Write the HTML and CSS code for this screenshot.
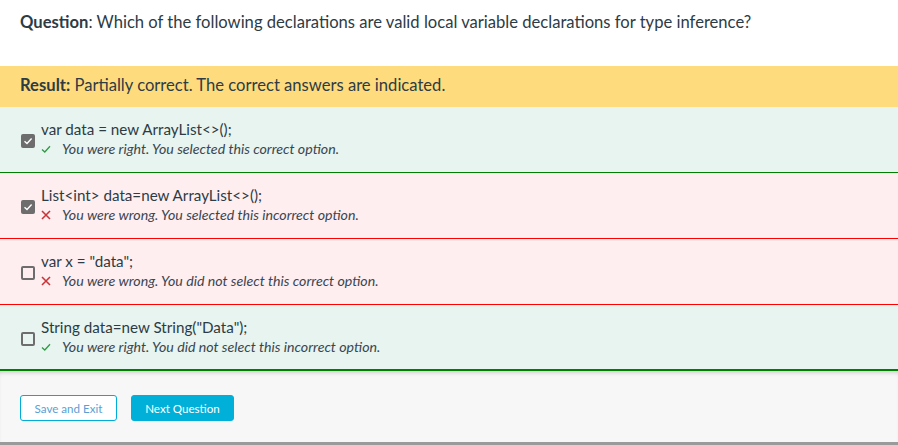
FILE: index.html
```html
<!DOCTYPE html>
<html>
<head>
<meta charset="utf-8">
<link rel="stylesheet" href="styles.css">
</head>
<body>
<div class="page">
  <div class="question"><b>Question</b>: Which of the following declarations are valid local variable declarations for type inference?</div>
  <div class="result"><b>Result:</b>&nbsp;Partially correct. The correct answers are indicated.</div>

  <div class="option correct">
    <span class="box checked"><svg viewBox="0 0 14 14" width="14" height="14"><path d="M3.5 7.2 L6 9.5 L10.6 4.6" fill="none" stroke="#fff" stroke-width="1.4"/></svg></span>
    <div class="text">
      <div class="answer">var data = new ArrayList&lt;&gt;();</div>
      <div class="feedback"><span class="icon"><svg viewBox="0 0 10 10" width="10" height="10"><path d="M1 5.4 L3.8 8 L9 2.2" fill="none" stroke="#2e9a44" stroke-width="1.3"/></svg></span>You were right. You selected this correct option.</div>
    </div>
  </div>

  <div class="option wrong">
    <span class="box checked"><svg viewBox="0 0 14 14" width="14" height="14"><path d="M3.5 7.2 L6 9.5 L10.6 4.6" fill="none" stroke="#fff" stroke-width="1.4"/></svg></span>
    <div class="text">
      <div class="answer">List&lt;int&gt; data=new ArrayList&lt;&gt;();</div>
      <div class="feedback"><span class="icon"><svg viewBox="0 0 10 10" width="10" height="10"><path d="M1 1 L9 9 M9 1 L1 9" fill="none" stroke="#c9343a" stroke-width="1.6"/></svg></span>You were wrong. You selected this incorrect option.</div>
    </div>
  </div>

  <div class="option wrong">
    <span class="box"></span>
    <div class="text">
      <div class="answer">var x = "data";</div>
      <div class="feedback"><span class="icon"><svg viewBox="0 0 10 10" width="10" height="10"><path d="M1 1 L9 9 M9 1 L1 9" fill="none" stroke="#c9343a" stroke-width="1.6"/></svg></span>You were wrong. You did not select this correct option.</div>
    </div>
  </div>

  <div class="option correct last">
    <span class="box"></span>
    <div class="text">
      <div class="answer">String data=new String("Data");</div>
      <div class="feedback"><span class="icon"><svg viewBox="0 0 10 10" width="10" height="10"><path d="M1 5.4 L3.8 8 L9 2.2" fill="none" stroke="#2e9a44" stroke-width="1.3"/></svg></span>You were right. You did not select this incorrect option.</div>
    </div>
  </div>

  <div class="footer">
    <button class="btn secondary">Save and Exit</button>
    <button class="btn primary">Next Question</button>
  </div>
</div>
</body>
</html>
```

FILE: styles.css
```css
html, body {
  margin: 0;
  padding: 0;
  background: #fff;
}
body {
  font-family: Lato, "Open Sans", sans-serif;
  color: #333;
}
.page {
  width: 898px;
  height: 445px;
  display: flex;
  flex-direction: column;
  overflow: hidden;
}
.question {
  height: 66px;
  box-sizing: border-box;
  padding: 12px 20px 0;
  font-size: 16.6px;
  line-height: 20px;
  color: #2d3b45;
}
.question b { font-weight: 700; }
.result {
  height: 41px;
  box-sizing: border-box;
  padding: 0 20px 3px;
  display: flex;
  align-items: center;
  background: #fedb7c;
  font-size: 16.6px;
  color: #2d3b45;
}
.option {
  height: 66px;
  box-sizing: border-box;
  display: flex;
  align-items: flex-start;
  padding-left: 21px;
  border-bottom: 1px solid;
}
.option.correct {
  background: #e7f4ef;
  border-bottom-color: #008000;
}
.option.wrong {
  background: #ffeef0;
  border-bottom-color: #ff0000;
}
.option.last {
  border-bottom-width: 2px;
}
.box {
  width: 14px;
  height: 14px;
  box-sizing: border-box;
  margin-top: 27px;
  border: 2px solid #6d6d6d;
  border-radius: 2px;
  flex: none;
}
.box.checked {
  background: #6d6d6d;
  border: none;
}
.box svg { display: block; }
.text {
  margin-left: 6px;
  padding-top: 13px;
}
.answer {
  font-size: 15.2px;
  line-height: 19px;
  color: #2d3b45;
}
.feedback {
  display: flex;
  align-items: center;
  font-size: 14.2px;
  line-height: 20px;
  font-style: italic;
  color: #3a4650;
}
.icon {
  width: 21px;
  flex: none;
  display: flex;
  align-items: center;
}
.icon svg { display: block; }
.footer {
  flex: 1;
  background: #f7f7f7;
  box-shadow: inset 0 4px 5px -3px rgba(0,0,0,0.22);
  border-bottom: 3px solid #9a9a9a;
  display: flex;
  align-items: flex-start;
  gap: 14px;
  padding: 24px 20px 0;
}
.btn {
  height: 26px;
  box-sizing: border-box;
  border-radius: 3px;
  font-family: Lato, "Open Sans", sans-serif;
  font-size: 11.6px;
  padding: 0;
  white-space: nowrap;
  cursor: pointer;
}
.btn.secondary {
  width: 97px;
  background: #fff;
  border: 1px solid #00acd8;
  color: #5a9fd4;
}
.btn.primary {
  width: 103px;
  background: #00b0d9;
  border: 1px solid #00b0d9;
  color: #fff;
}
```
